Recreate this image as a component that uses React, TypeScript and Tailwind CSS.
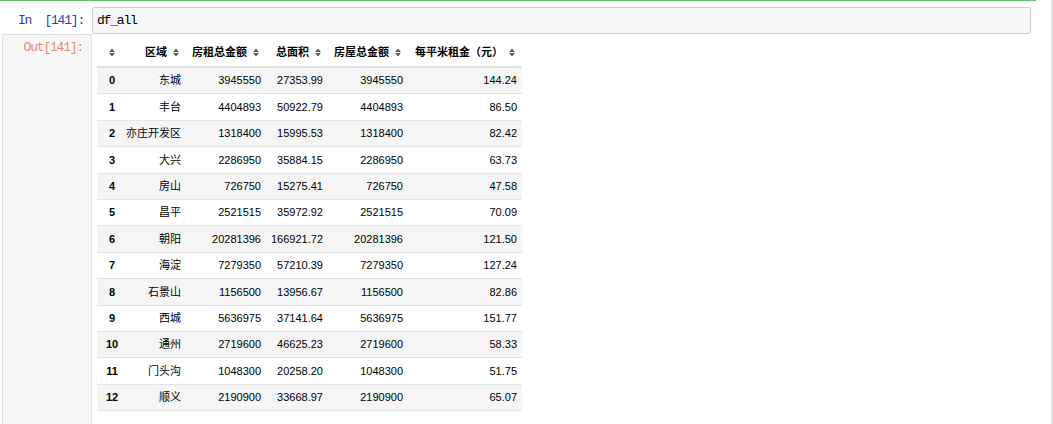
import React from "react";

const rows: [string, string, string, string, string, string][] = [
  ["0", "东城", "3945550", "27353.99", "3945550", "144.24"],
  ["1", "丰台", "4404893", "50922.79", "4404893", "86.50"],
  ["2", "亦庄开发区", "1318400", "15995.53", "1318400", "82.42"],
  ["3", "大兴", "2286950", "35884.15", "2286950", "63.73"],
  ["4", "房山", "726750", "15275.41", "726750", "47.58"],
  ["5", "昌平", "2521515", "35972.92", "2521515", "70.09"],
  ["6", "朝阳", "20281396", "166921.72", "20281396", "121.50"],
  ["7", "海淀", "7279350", "57210.39", "7279350", "127.24"],
  ["8", "石景山", "1156500", "13956.67", "1156500", "82.86"],
  ["9", "西城", "5636975", "37141.64", "5636975", "151.77"],
  ["10", "通州", "2719600", "46625.23", "2719600", "58.33"],
  ["11", "门头沟", "1048300", "20258.20", "1048300", "51.75"],
  ["12", "顺义", "2190900", "33668.97", "2190900", "65.07"],
];

const widths = ["w-[29px]", "w-[60px]", "w-[80px]", "w-[62px]", "w-[80px]", "w-[114px]"];
const headers = ["", "区域", "房租总金额", "总面积", "房屋总金额", "每平米租金（元）"];

function SortIcon() {
  return (
    <svg width="6" height="9" viewBox="0 0 6 9" className="shrink-0">
      <path d="M0 4 L3 0.5 L6 4 Z" fill="#5e5e5e" />
      <path d="M0 5 L3 8.5 L6 5 Z" fill="#5e5e5e" />
    </svg>
  );
}

const mono = { fontFamily: '"Liberation Mono", monospace' };

export default function App() {
  return (
    <div
      className="flex w-[1053px] h-[424px] overflow-hidden bg-white"
      style={{ fontFamily: '"Liberation Sans", "Noto Sans CJK SC", sans-serif' }}
    >
      <div className="flex flex-col w-[1051px] h-full">
        <div className="h-px w-[1036px] bg-[#66bb6a] shrink-0" />
        {/* input row */}
        <div className="flex mt-[6px] shrink-0">
          <div
            className="w-[92px] flex justify-end items-center pr-[8px] text-[13px] tracking-[-1.2px] text-[#303f9f]"
            style={mono}
          >
            In&nbsp;&nbsp;[141]:
          </div>
          <div className="w-[939px] h-[27px] border border-[#cfcfcf] bg-[#f7f7f7] rounded-[2px] flex items-center pl-[4px]">
            <span className="text-[13px] tracking-[-1.2px] text-black" style={mono}>
              df_all
            </span>
          </div>
        </div>
        {/* output row */}
        <div className="flex flex-1">
          <div className="ml-[2px] w-[90px] h-full bg-[#f7f7f7] border-t border-l border-r border-[#e0e0e0] flex justify-end pr-[8px] pt-[5px]">
            <span className="text-[13px] tracking-[-1.2px] leading-[16px] text-[#e38b72]" style={mono}>
              Out[141]:
            </span>
          </div>
          <div className="ml-[5px] mt-[4px] flex flex-col text-[11px] text-black">
            <div className="flex h-[30px] border-b-2 border-[#dedede] font-bold">
              {headers.map((h, i) => (
                <div
                  key={i}
                  className={`${widths[i]} flex items-center gap-[6px] ${
                    i === 0 ? "justify-center pl-[1px]" : "justify-end pr-[7px]"
                  }`}
                >
                  {h && <span className="whitespace-nowrap">{h}</span>}
                  <SortIcon />
                </div>
              ))}
            </div>
            {rows.map((r, ri) => (
              <div
                key={ri}
                className={`flex h-[26.4px] border-b border-[#e3e3e3] ${
                  ri % 2 === 0 ? "bg-[#f5f5f5]" : "bg-white"
                }`}
              >
                {r.map((c, ci) => (
                  <div
                    key={ci}
                    className={`${widths[ci]} flex items-center whitespace-nowrap ${
                      ci === 0 ? "justify-center font-bold pl-[1px]" : "justify-end pr-[5px]"
                    }`}
                  >
                    {c}
                  </div>
                ))}
              </div>
            ))}
          </div>
        </div>
      </div>
      <div className="w-[2px] h-full bg-[#e3e3e3]" />
    </div>
  );
}
